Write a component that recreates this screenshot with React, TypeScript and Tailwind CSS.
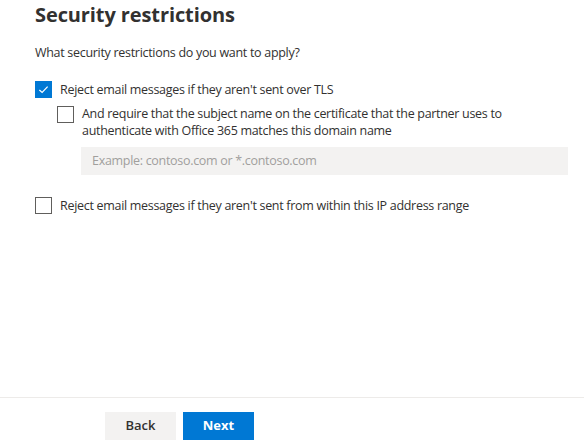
import React from 'react';

function Checkbox({ checked }: { checked?: boolean }) {
  return checked ? (
    <span className="flex h-[17px] w-[17px] shrink-0 items-center justify-center bg-[#0078d4]">
      <svg width="11" height="11" viewBox="0 0 12 12" fill="none">
        <path d="M1.5 6.5 L4.5 9.3 L10.5 2.8" stroke="white" strokeWidth="1.3" />
      </svg>
    </span>
  ) : (
    <span className="h-[17px] w-[17px] shrink-0 border border-[#605e5c] bg-white" />
  );
}

export default function App() {
  return (
    <div
      className="flex h-[445px] w-[584px] flex-col bg-white text-[#323130]"
      style={{ fontFamily: '"Open Sans", "Noto Sans", sans-serif' }}
    >
      <div className="flex-1 pl-[35px] pr-[16px] text-[12.5px] tracking-[-0.3px]">
        <h1 className="pt-[3px] text-[20px] font-bold leading-[24px] tracking-[-0.1px]">
          Security restrictions
        </h1>
        <p className="mt-[16px] leading-[20px]">What security restrictions do you want to apply?</p>

        <label className="mt-[18px] flex items-center gap-[8px]">
          <Checkbox checked />
          <span className="leading-[17px]">Reject email messages if they aren't sent over TLS</span>
        </label>

        <div className="ml-[22px] mt-[8px]">
          <label className="flex items-start gap-[8px]">
            <Checkbox />
            <span className="-mt-[1px] leading-[17px]">
              And require that the subject name on the certificate that the partner uses to
              <br />
              authenticate with Office 365 matches this domain name
            </span>
          </label>
          <div className="ml-[24px] mt-[8px] flex h-[28px] items-center bg-[#f3f2f1] pl-[11px] text-[#a19f9d]">
            Example: contoso.com or *.contoso.com
          </div>
        </div>

        <label className="mt-[22px] flex items-center gap-[8px]">
          <Checkbox />
          <span className="leading-[17px]">
            Reject email messages if they aren't sent from within this IP address range
          </span>
        </label>
      </div>

      <div className="h-[15px] border-t border-[#edebe9]" />
      <div className="flex gap-[7px] pl-[105px] pb-[5px]">
        <button className="h-[28px] w-[71px] bg-[#f3f2f1] text-[13px] font-semibold text-[#323130]">
          Back
        </button>
        <button className="h-[28px] w-[71px] bg-[#0078d4] text-[13px] font-bold text-white">
          Next
        </button>
      </div>
    </div>
  );
}
